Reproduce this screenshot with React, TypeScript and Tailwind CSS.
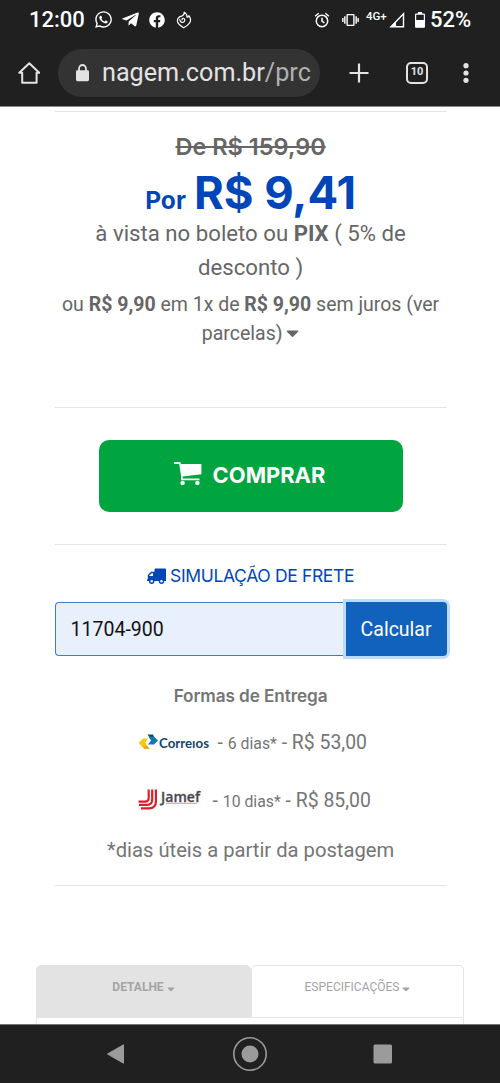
import { ReactNode } from 'react';
import { FaCaretDown, FaFacebook, FaTelegramPlane, FaWhatsapp } from 'react-icons/fa';

type Tab = {
    label: string;
    active: boolean;
};

const tabs: Tab[] = [
    { label: 'DETALHE', active: true },
    { label: 'ESPECIFICAÇÕES', active: false },
];

function StatusBar() {
    return (
        <div className="flex h-[39px] items-center pl-[29px] text-white">
            <span className="w-[55px] text-[22px] leading-[39px] font-medium whitespace-nowrap">12:00</span>
            <FaWhatsapp className="ml-[10px] h-[19px] w-[19px]" />
            <FaTelegramPlane className="ml-[8px] h-[19px] w-[19px]" />
            <FaFacebook className="ml-[9px] h-[16px] w-[16px]" />
            <svg className="ml-[11px] h-[18px] w-[16px]" viewBox="0 0 16 18" fill="none" stroke="currentColor" strokeWidth="1.2" strokeLinecap="round" strokeLinejoin="round">
                <path d="M8.2 1.2C8.4 3 7.7 4 6.3 4.8C3 5.5 1.2 7.6 1.4 10.4C1.8 13 4.6 14.8 7.7 16.8C10.5 15.2 14.6 12.6 14.6 9C14.6 7.2 13.8 6 12.9 4.7C12.6 5.7 12 6.2 11.1 6.3C11.1 4 10 2.2 8.2 1.2Z" />
                <path d="M3.8 8.6C3.8 10.6 5.3 11.6 6.9 11.3C8.6 10.9 9.3 9.2 8.4 7.9C7.5 6.8 5.9 7.2 6 8.8" />
            </svg>
            <svg className="ml-[122px] h-[18px] w-[16px]" viewBox="0 0 17 18" fill="none" stroke="currentColor" strokeWidth="1.6">
                <circle cx="8.5" cy="10" r="6.1" />
                <path d="M8.5 6.5V10.3L11 12M1.2 5L5 1.8M15.8 5L12 1.8" />
            </svg>
            <svg className="ml-[12px] h-[16px] w-[17px]" viewBox="0 0 18 16" fill="none" stroke="currentColor" strokeWidth="1.5">
                <rect x="5.4" y="2.3" width="7.2" height="11.4" rx="0.8" />
                <path d="M3 4V12M15 4V12M0.9 6V10M17.1 6V10" />
            </svg>
            <span className="mb-[8px] ml-[7px] w-[23px] text-[11.5px] leading-[12px] font-medium whitespace-nowrap">4G+</span>
            <svg className="h-[16px] w-[16px]" viewBox="0 0 16 16">
                <path d="M14.5 1.8V14.8H2Z" fill="none" stroke="currentColor" strokeWidth="1.4" />
                <path d="M7 9.2V15H1.2Z" fill="currentColor" />
            </svg>
            <svg className="ml-[10px] h-[16px] w-[10px]" viewBox="0 0 10 16">
                <path d="M3 0H7V2H3Z" fill="currentColor" />
                <rect x="0.6" y="2.2" width="8.8" height="13" rx="0.6" fill="none" stroke="currentColor" strokeWidth="1.2" />
                <path d="M0.6 8H9.4V15.2H0.6Z" fill="currentColor" />
            </svg>
            <span className="ml-[5px] text-[22px] leading-[39px] font-medium whitespace-nowrap">52%</span>
        </div>
    );
}

function BrowserBar() {
    return (
        <div className="flex h-[67px] items-center pl-[18px] text-[#e3e3e3]">
            <svg className="h-[22px] w-[22px]" viewBox="0 0 22 22" fill="none" stroke="currentColor" strokeWidth="2" strokeLinejoin="round">
                <path d="M11.3 1.3L1.3 10.7H4.2V20.7H18.6V10.7H21.2Z" />
            </svg>
            <div className="ml-[18px] flex h-[48px] w-[262px] items-center rounded-full bg-[#333333] pl-[17px]">
                <svg className="h-[18px] w-[15px]" viewBox="0 0 15 18">
                    <path d="M4 7V4.7A3.4 3.6 0 0 1 11 4.7V7" fill="none" stroke="currentColor" strokeWidth="1.8" />
                    <rect x="1" y="6.2" width="13" height="11" rx="1.4" fill="currentColor" />
                </svg>
                <div className="mt-px ml-[12px] text-[25.2px] leading-[36px] whitespace-nowrap">
                    nagem.com.br<span className="text-[#b0b0b0]">/prc</span>
                </div>
            </div>
            <svg className="ml-[29px] h-[20px] w-[20px]" viewBox="0 0 20 20" stroke="currentColor" strokeWidth="2.2">
                <path d="M10 0.5V19.5M0.5 10H19.5" />
            </svg>
            <div className="ml-[37px] flex h-[22px] w-[22px] items-center justify-center rounded-[5px] border-2 border-current text-[11px] font-bold">
                10
            </div>
            <svg className="ml-[35px] h-[20px] w-[6px]" viewBox="0 0 6 20" fill="currentColor">
                <circle cx="3" cy="2.7" r="2.6" />
                <circle cx="3" cy="10" r="2.6" />
                <circle cx="3" cy="17.3" r="2.6" />
            </svg>
        </div>
    );
}

function Price() {
    return (
        <section className="flex h-[295px] flex-col items-center whitespace-nowrap text-[#666666]">
            <div className="mt-[21px] h-[28px] font-[Inter] text-[23.5px] leading-[28px] font-semibold line-through decoration-2">De R$ 159,90</div>
            <div className="flex h-[55px] items-baseline font-[Inter] font-bold text-[#0046b8]">
                <span className="text-[24.5px]">Por</span>
                <span className="ml-[8px] text-[45.4px] leading-[64px]">R$ 9,41</span>
            </div>
            <div className="text-center text-[22.2px] leading-[34px]">
                à vista no boleto ou <b>PIX</b> ( 5% de
                <br />
                desconto )
            </div>
            <div className="mt-[6px] text-center text-[19.5px] leading-[29px]">
                ou <b>R$ 9,90</b> em 1x de <b>R$ 9,90</b> sem juros (ver
                <br />
                parcelas) <FaCaretDown className="-ml-px inline h-[20px] w-[13px] align-[-3px]" />
            </div>
        </section>
    );
}

function BuyButton() {
    return (
        <section className="flex h-[138px] items-center justify-center border-y border-[#e5e5e5]">
            <button className="flex h-[72px] w-[304px] items-center rounded-[10px] bg-[#00a53f] pl-[75px] text-white">
                <svg className="mb-[4px] h-[24px] w-[28px]" viewBox="0 0 28 24" fill="currentColor">
                    <path d="M0 0H6.3L7 2H27.4V12.2L8.6 14.4L8.8 16.5H25.5V18.3H7.4C6.8 17.3 6.9 16.4 7.2 14.8L5.2 2H0Z" />
                    <circle cx="8.6" cy="20.9" r="2.2" />
                    <circle cx="23.4" cy="20.9" r="2.2" />
                </svg>
                <span className="mb-px ml-[11px] font-[Inter] text-[21.9px] font-bold">COMPRAR</span>
            </button>
        </section>
    );
}

function CorreiosLogo() {
    return (
        <svg className="h-[18px] w-[72px] overflow-visible" viewBox="0 0 72 18">
            <path d="M5 4.5H10L7.3 8.5L10 13H4.5L0.5 9Z" fill="#fdc70d" />
            <path d="M4.3 12.2H10L11.5 15H6.2Z" fill="#e7a922" />
            <path d="M9.5 0.5H15L16.2 3.2H11.5Z" fill="#0b4a78" />
            <path d="M10.5 2.8H16.2L20 6.5L16 10.6H10L13 6.5Z" fill="#1279b5" />
            <text x="21" y="14" fontFamily="Lato, sans-serif" fontSize="13.5" fontWeight="700" fill="#14466f" textLength="50" lengthAdjust="spacingAndGlyphs">Correıos</text>
        </svg>
    );
}

function JamefLogo() {
    return (
        <svg className="h-[22px] w-[64px] overflow-visible" viewBox="0 0 64 22">
            <g fill="none" stroke="#dc1f2b" strokeWidth="2.2">
                <path d="M10.7 -0.5V8Q10.7 11.6 7 11.6H0.5" />
                <path d="M14.2 -0.5V9.5Q14.2 14.9 9 14.9H1" />
                <path d="M17.9 -0.5V11.5Q17.9 18.3 11 18.3H3" />
            </g>
            <text x="23" y="11.5" fontFamily="Open Sans, sans-serif" fontSize="14" fontWeight="600" fill="#4a4a4c" stroke="#4a4a4c" strokeWidth="0.3" textLength="39" lengthAdjust="spacingAndGlyphs">Jamef</text>
            <path d="M28 13.3H59" stroke="#e8848a" strokeWidth="0.9" />
        </svg>
    );
}

function DeliveryRow({ logo, days, price }: { logo: ReactNode; days: string; price: string }) {
    return (
        <div className="flex h-[58px] items-center text-[19.4px] whitespace-pre">
            {logo}
            <span>
                - <span className="text-[15.8px]">{days}</span> - {price}
            </span>
        </div>
    );
}

function Shipping() {
    return (
        <section className="flex h-[341px] flex-col border-b border-[#e5e5e5] text-[#757575]">
            <h2 className="mt-[18px] flex h-[26px] items-center justify-center font-[Inter] text-[17.5px] tracking-[-0.35px] whitespace-nowrap text-[#0046b8]">
                <svg className="mr-[4px] h-[17px] w-[19px]" viewBox="0 0 19 17" fill="currentColor">
                    <path fillRule="evenodd" d="M7.5 1.5Q7.5 0.5 8.5 0.5H18Q19 0.5 19 1.5V13H0V11.7L0.8 11V7L4 3.7H7.5ZM4.7 5.2L2.3 7.6V8.1H6V5.2Z" />
                    <circle cx="4.7" cy="13.2" r="2" fill="white" stroke="currentColor" strokeWidth="1.4" />
                    <circle cx="14.5" cy="13.2" r="2" fill="white" stroke="currentColor" strokeWidth="1.4" />
                </svg>
                SIMULAÇÃO DE FRETE
            </h2>
            <form className="mt-[13px] flex h-[54px]">
                <input
                    className="h-full w-[291px] rounded-l-[4px] border border-r-0 border-[#3b7ecb] bg-[#e8effd] px-[15px] text-[19.5px] text-[#111111] outline-none"
                    defaultValue="11704-900"
                />
                <button type="button" className="h-full w-[101px] rounded-r-[4px] bg-[#1162bd] pt-px text-[19.5px] text-white shadow-[0_0_0_3px_#bddcfc]">
                    Calcular
                </button>
            </form>
            <h3 className="mt-[28px] h-[24px] text-center font-[Inter] text-[17.2px] leading-[24px] font-semibold tracking-[-0.1px]">Formas de Entrega</h3>
            <div className="mt-[6px] pl-[83px]">
                <DeliveryRow logo={<span className="mr-[8px]"><CorreiosLogo /></span>} days="6 dias*" price="R$ 53,00" />
                <DeliveryRow logo={<span className="mr-[11px]"><JamefLogo /></span>} days="10 dias*" price="R$ 85,00" />
            </div>
            <p className="mt-[6px] text-center text-[20.2px] leading-[28px] whitespace-nowrap">*dias úteis a partir da postagem</p>
        </section>
    );
}

function Tabs() {
    return (
        <div className="mx-auto mt-[79px] w-[428px]">
            <div className="flex">
                {tabs.map((tab) => (
                    <div
                        key={tab.label}
                        className={
                            tab.active
                                ? 'flex h-[53px] w-[215px] justify-center rounded-t-[5px] border border-[#e3e3e3] bg-[#e3e3e3] pt-[12px] text-[12px] leading-[18px] font-bold text-[#a3a3a3]'
                                : 'flex h-[53px] w-[213px] justify-center rounded-t-[5px] border border-[#e5e5e5] pt-[12px] text-[12px] leading-[18px] text-[#a3a3a3]'
                        }
                    >
                        {tab.label}
                        <FaCaretDown className="mt-[5px] ml-[3px] h-[12px] w-[8px]" />
                    </div>
                ))}
            </div>
            <div className="h-[6px] border-x border-[#e5e5e5]" />
        </div>
    );
}

function NavigationBar() {
    return (
        <nav className="h-[59px] border-t border-[#777777] bg-[#202020]">
            <svg className="h-[58px] w-[500px]" viewBox="0 0 500 58" fill="#9b9b9b">
                <path d="M107.5 29L123.5 19.8V38.2Z" stroke="#9b9b9b" strokeLinejoin="round" />
                <circle cx="250" cy="29" r="16.2" fill="none" stroke="#9b9b9b" strokeWidth="1.6" />
                <circle cx="250" cy="29" r="8.5" />
                <rect x="373.5" y="19.5" width="18.5" height="19" rx="1.5" />
            </svg>
        </nav>
    );
}

export default function App() {
    return (
        <div className="flex h-[1083px] w-[500px] flex-col overflow-hidden bg-white font-[Roboto,sans-serif]">
            <header className="h-[107px] border-b border-[#8a8a8a] bg-[#202020]">
                <StatusBar />
                <BrowserBar />
            </header>
            <main className="h-[917px]">
                <div className="mt-[4px] ml-[54.6px] w-[392px]">
                    <hr className="border-[#e5e5e5]" />
                    <Price />
                    <BuyButton />
                    <Shipping />
                </div>
                <Tabs />
            </main>
            <NavigationBar />
        </div>
    );
}
